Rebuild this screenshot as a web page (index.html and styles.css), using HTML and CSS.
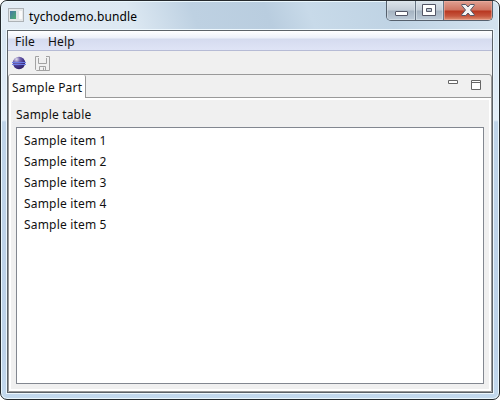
FILE: index.html
```html
<!DOCTYPE html>
<html lang="en">
<head>
<meta charset="utf-8">
<title>tychodemo.bundle</title>
<link rel="stylesheet" href="styles.css">
</head>
<body>
<div class="window">
  <header class="titlebar">
    <svg class="app-icon" width="16" height="14" viewBox="0 0 16 14">
      <defs><linearGradient id="g" x1="0" y1="0" x2="1" y2="1"><stop offset="0" stop-color="#4678a6"/><stop offset="1" stop-color="#4fae70"/></linearGradient></defs>
      <rect x=".5" y=".5" width="15" height="13" fill="#e5e8ea" stroke="#adb2b6"/>
      <rect x="2" y="3" width="6" height="8" fill="url(#g)"/>
      <rect x="8" y="3" width="3" height="8" fill="#dfe4e7"/>
      <rect x="11" y="3" width="3" height="8" fill="#fafafa"/>
    </svg>
    <h1 class="title">tychodemo.bundle</h1>
    <div class="controls">
      <button class="control minimize" aria-label="Minimize"><svg width="13" height="15" viewBox="0 0 13 15"><rect x=".5" y="10.500" width="12" height="4" rx=".5" fill="#fff" stroke="#535666"/></svg></button>
      <button class="control maximize" aria-label="Maximize"><svg width="14" height="12" viewBox="0 0 14 12"><path fill="#fff" fill-rule="evenodd" stroke="#535666" d="M.5.5h13v11H.5zM4.500 4.500v3h5v-3z"/></svg></button>
      <button class="control close" aria-label="Close"><svg width="14" height="12" viewBox="0 0 14 12"><path fill="#f4f4f4" stroke="#535666" d="M.8.5h4L7 3l2.200-2.500h4v1L9.500 6l3.700 4.500v1h-4L7 9l-2.200 2.500h-4v-1L4.500 6 .8 1.500z"/></svg></button>
    </div>
  </header>
  <main class="client">
    <nav class="menu"><span class="menu-item">File</span><span class="menu-item">Help</span></nav>
    <div class="toolbar">
      <svg width="14" height="14" viewBox="0 0 14 14">
        <defs><radialGradient id="s" cx=".3" cy=".2" r=".8"><stop offset="0" stop-color="#e0dcee"/><stop offset=".35" stop-color="#7568ae"/><stop offset=".7" stop-color="#44358c"/><stop offset="1" stop-color="#33256c"/></radialGradient></defs>
        <circle cx="7" cy="7" r="6.200" fill="url(#s)"/>
        <path d="M0 6.500h14M0 8.500h14" stroke="#6c7de6"/>
      </svg>
      <svg class="save" width="15" height="15" viewBox="0 0 15 15" fill="none" stroke="#a2a2a2">
        <path d="M4 .5H.5v13l1 1h13V.5H11M3.500 2v5.500h8V2M4.500 14.500v-4h6v4M8.500 14v-2.500"/>
      </svg>
    </div>
    <section class="part">
      <div class="tabs">
        <div class="tab">Sample Part</div>
        <div class="tab-space">
          <svg width="34" height="10" viewBox="0 0 34 10" fill="#fff" stroke="#666"><path d="M.5.5h9v3h-9zM23.500.5h9v9h-9zM23.500 2.500h9"/></svg>
        </div>
      </div>
      <div class="content">
        <div class="label">Sample table</div>
        <ul class="table"><li>Sample item 1</li><li>Sample item 2</li><li>Sample item 3</li><li>Sample item 4</li><li>Sample item 5</li></ul>
      </div>
    </section>
  </main>
</div>
</body>
</html>
```
FILE: styles.css
```css
* { box-sizing: border-box; }
body { margin: 0; background: #fff; font: 12px/20px "Noto Sans", sans-serif; letter-spacing: .18px; color: #111; }
.window {
  width: 500px; height: 400px; padding: 0 6px 6px;
  display: flex; flex-direction: column;
  border: 1px solid #25292d; border-radius: 7px;
  background: linear-gradient(#d5e4f0 0, #dce9f5 70px, #e4eef8 119px, #bfd4e9 121px, #bdd2e9 350px, #c3d9ee 100%);
  box-shadow: inset 0 0 0 1px #eaf7fd;
}
.titlebar {
  height: 29px; flex: none; display: flex; align-items: flex-start;
  margin: 0 -5px; padding-left: 6px;
  background: linear-gradient(70deg, #e4edf6 0, #dce8f2 125px, #bed1e2 185px, #b9cddf 255px, #c8dae9 295px, #bfd3e4 370px, #d4e3ef 100%);
  border-top: 1px solid #eaf7fd; border-radius: 6px 6px 0 0;
}
.app-icon { margin-top: 6px; }
.title { margin: 4px 0 0 5px; font-size: 12px; font-weight: 400; line-height: 21px; letter-spacing: .12px; color: #000; }
.controls {
  display: flex; margin: -1px 5px 0 auto; height: 20px; width: 107px;
  border: 1px solid #55606d; border-top: 0; border-radius: 0 0 5px 5px; overflow: hidden;
}
.control {
  width: 29px; margin: 0; padding: 0; border: 0; border-right: 1px solid #687584;
  display: flex; justify-content: center; align-items: flex-start;
  background: linear-gradient(#dce4eb 0, #c4ced8 9px, #a5b3c1 10px, #bdcbd8 100%);
  box-shadow: inset 0 0 0 1px #e0e8ef88;
}
.maximize { width: 28px; padding: 3px 1px 0 0; }
.close {
  width: 48px; padding-top: 3px; border-right: 0;
  background: linear-gradient(#dfa092 0, #ce7461 9px, #b83720 10px, #c6553d 15px, #dd9274 100%);
  box-shadow: inset 0 0 0 1px #f2b4a688;
}
.client {
  flex: 1; min-height: 0; display: flex; flex-direction: column;
  border: 1px solid #5c6268; background: #f0f0f0;
  box-shadow: 0 0 0 1px #edf7fd;
}
.menu {
  height: 20px; flex: none; display: flex; gap: 13px; padding-left: 7px; line-height: 21px;
  border-bottom: 1px solid #b6bbd5;
  background: linear-gradient(#fff 0, #edf0f9 7px, #d5dbef 8px, #dfe4f6 100%);
}
.toolbar { height: 23px; flex: none; display: flex; padding: 5px 0 0 4px; }
.save { margin-left: 9px; }
.part {
  flex: 1; min-height: 0; display: flex; flex-direction: column;
  border: 1px solid #999; border-radius: 3px 3px 0 0;
}
.tabs { height: 23px; flex: none; display: flex; }
.tab {
  width: 77px; padding-left: 3px; line-height: 25px; white-space: nowrap;
  background: #fff; border-right: 1px solid #999; border-radius: 2px 2px 0 0;
}
.tab-space { flex: 1; display: flex; justify-content: flex-end; padding: 5px 9px 0 0; border-bottom: 1px solid #999; }
.content {
  flex: 1; min-height: 0; display: flex; flex-direction: column;
  border: 2px solid #fff; background: #f0f0f0; padding: 4px 5px 5px;
}
.label { height: 23px; flex: none; line-height: 21px; }
.table {
  flex: 1; margin: 0; padding: 2px 7px; list-style: none;
  border: 1px solid #828790; background: #fff; line-height: 21px;
}
```
